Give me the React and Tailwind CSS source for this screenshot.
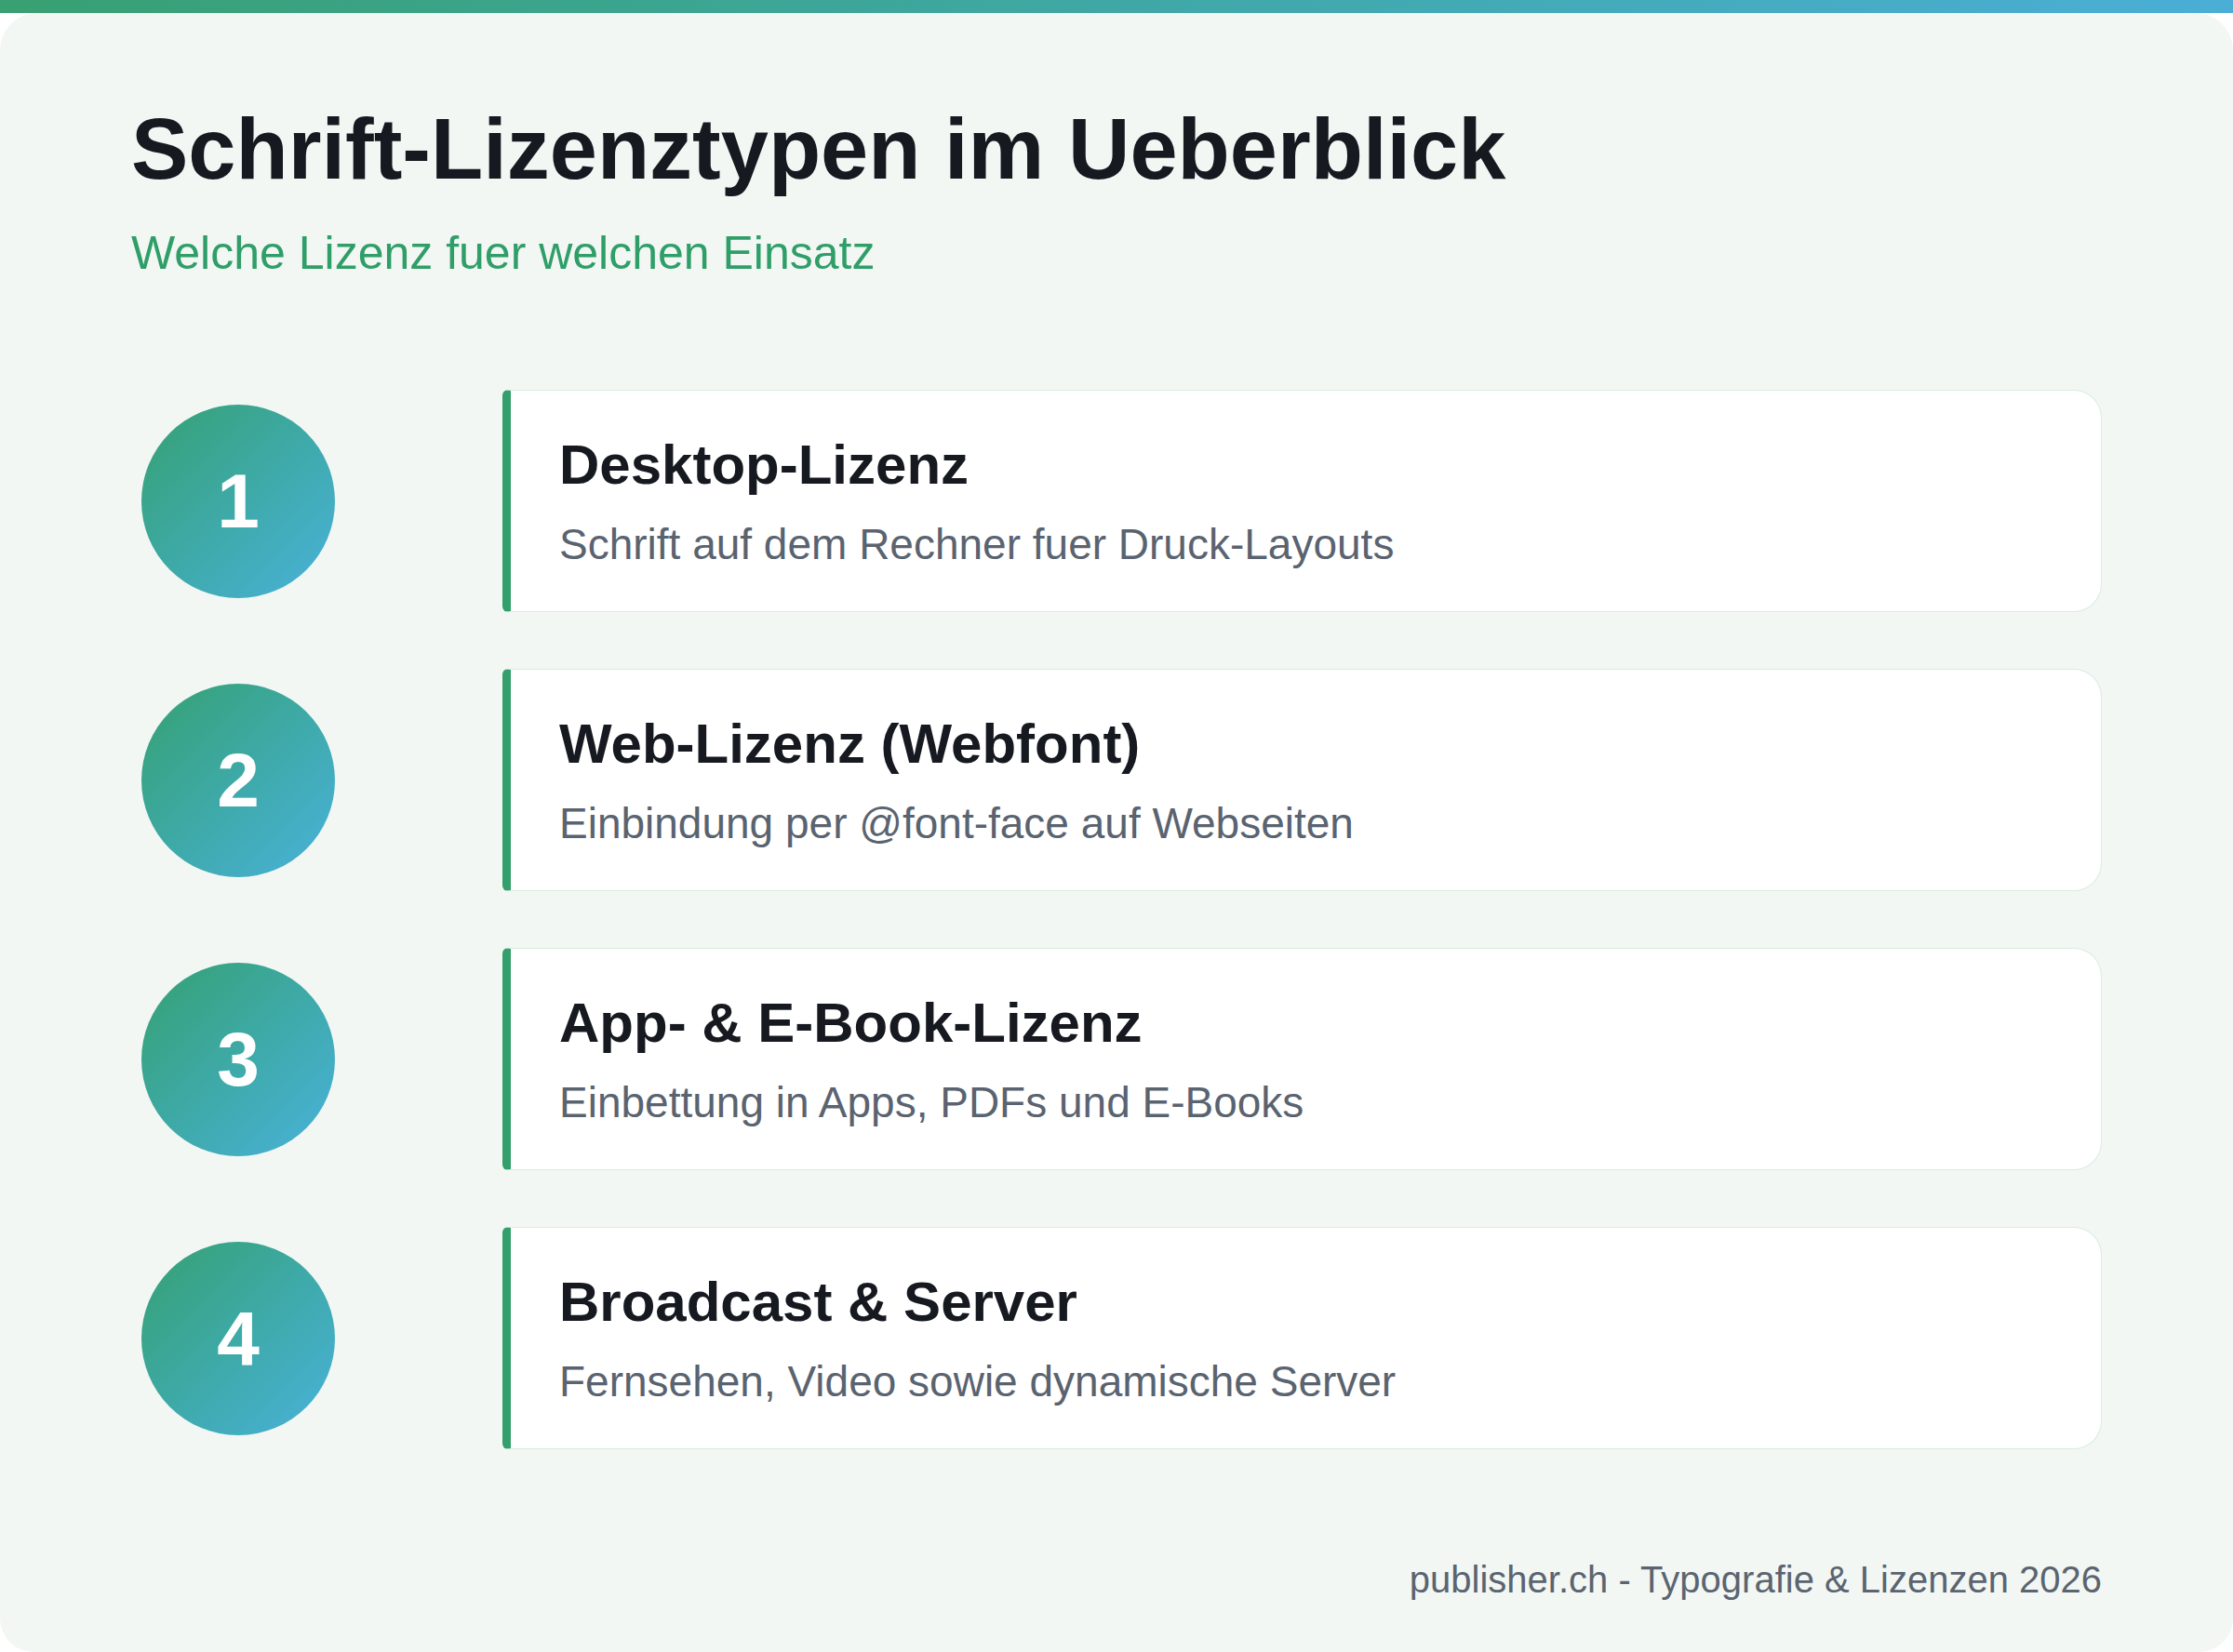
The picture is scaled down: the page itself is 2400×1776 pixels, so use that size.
const items = [
  ["1", "Desktop-Lizenz", "Schrift auf dem Rechner fuer Druck-Layouts"],
  ["2", "Web-Lizenz (Webfont)", "Einbindung per @font-face auf Webseiten"],
  ["3", "App- & E-Book-Lizenz", "Einbettung in Apps, PDFs und E-Books"],
  ["4", "Broadcast & Server", "Fernsehen, Video sowie dynamische Server"],
];

export default function App() {
  return (
    <div className="w-[2400px] h-[1776px] bg-white flex flex-col" style={{ fontFamily: '"Liberation Sans", Arial, sans-serif' }}>
      <div className="h-[16px] bg-gradient-to-r from-[#38a072] to-[#4aaed6]" />
      <div className="flex-1 bg-[#f2f7f4] rounded-[36px] rounded-t-[40px] px-[141px] pt-[93px] pb-[54px] flex flex-col">
        <h1 className="text-[92px] leading-[106px] font-bold text-[#161a20]">Schrift-Lizenztypen im Ueberblick</h1>
        <p className="mt-[29px] text-[50px] leading-[60px] text-[#2f9e68]">Welche Lizenz fuer welchen Einsatz</p>
        <div className="mt-[117px] flex flex-col gap-[61px]">
          {items.map(([n, t, d]) => (
            <div key={n} className="flex items-center">
              <div className="w-[230px] flex justify-center">
                <div className="w-[208px] h-[208px] rounded-full bg-gradient-to-br from-[#36a070] to-[#4ab1dc] flex items-center justify-center text-white font-bold text-[82px] leading-none">{n}</div>
              </div>
              <div className="ml-[169px] flex-1 h-[239px] bg-white border border-[#d9ebe3] border-l-[9px] border-l-[#33a06b] rounded-r-[30px] rounded-l-[6px] flex flex-col justify-center pl-[52px]">
                <div className="text-[60px] leading-[70px] font-bold text-[#161a20]">{t}</div>
                <div className="mt-[22px] text-[46px] leading-[56px] text-[#5a6370]">{d}</div>
              </div>
            </div>
          ))}
        </div>
        <div className="mt-[116px] text-right text-[40px] leading-[48px] text-[#5b6470]">publisher.ch - Typografie &amp; Lizenzen 2026</div>
      </div>
    </div>
  );
}
